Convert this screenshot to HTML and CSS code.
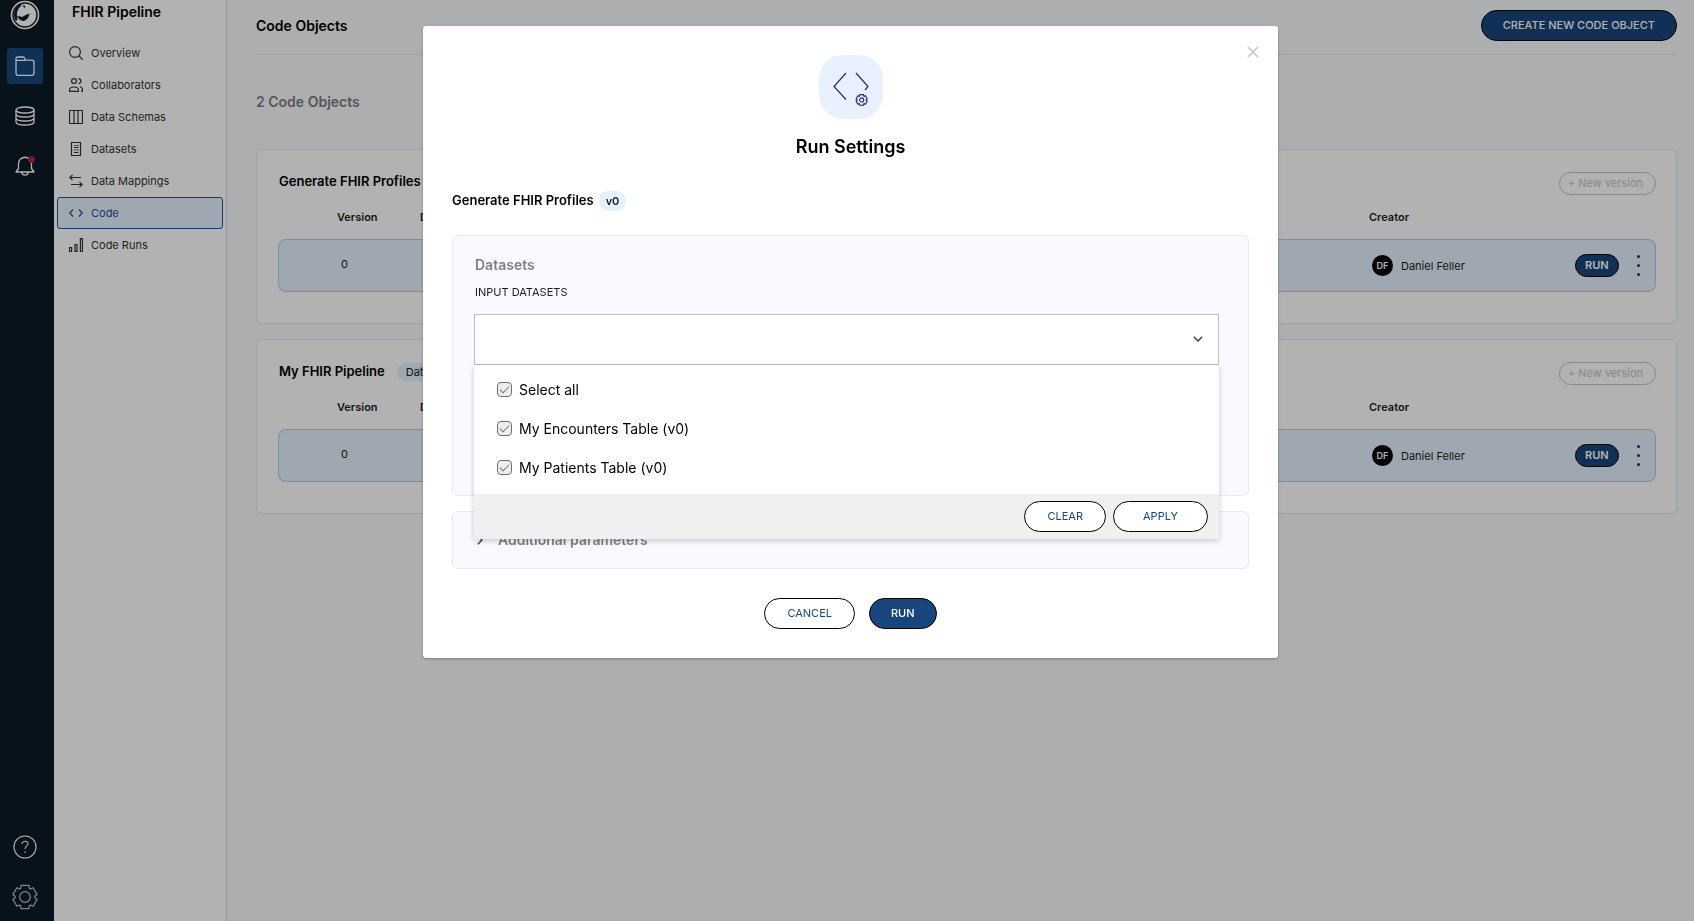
FILE: index.html
```html
<!DOCTYPE html>
<html lang="en">
<head>
    <meta charset="UTF-8">
    <meta name="viewport" content="width=device-width, initial-scale=1.0">
    <title>FHIR Pipeline - Code Objects</title>
    <link rel="stylesheet" href="styles.css">
</head>
<body>
    <div class="app">
        <nav class="rail">
            <a href="#" class="logo" aria-label="Home">
                <svg width="30" height="30" viewBox="0 0 30 30">
                    <circle cx="15" cy="15" r="13.5" fill="none" stroke="#fff" stroke-width="1.6"/>
                    <circle cx="15" cy="15" r="11.2" fill="#fff"/>
                    <path d="M10 4C4 8 2.500 15 6 21c2-1 1.500-3 1-5C6.500 12 8 8 12 5z" fill="#0b1b28"/>
                    <path d="M7 15.500c2 1.500 3.500.5 5 1.500 2-.5 4-3 8-3.500-1.500 1.500-1 3.500-2.500 5-2 1.500-2.500 3-4.500 2.500-2-.5-5-2-6-5.500z" fill="#0b1b28"/>
                    <path d="M13 4.500l1 4 1.500-2z" fill="#0b1b28"/>
                </svg>
            </a>
            <a href="#" class="rail-link active" aria-label="Projects">
                <svg width="20" height="20" viewBox="0 0 20 20" fill="none" stroke="#fff" stroke-width="1.3" stroke-linejoin="round">
                    <path d="M1 16.500V2.500Q1 1 2.500 1h5.500q1 0 1.500 1l.8 1.500q.4.700 1.200.700h5.300q2.200 0 2.200 2.200v10.600q0 2.500-2.500 2.500h-13Q1 19.500 1 16.500zM1 4.300h10"/>
                </svg>
            </a>
            <a href="#" class="rail-link" aria-label="Data">
                <svg width="20" height="20" viewBox="0 0 20 20" fill="none" stroke="#fff" stroke-width="1.3">
                    <ellipse cx="10" cy="4" rx="9" ry="3"/>
                    <path d="M1 4v12c0 4 18 4 18 0V4M1 8c0 4 18 4 18 0M1 12c0 4 18 4 18 0"/>
                </svg>
            </a>
            <a href="#" class="rail-link" aria-label="Notifications">
                <svg width="20" height="20" viewBox="0 0 20 20" fill="none" stroke="#fff" stroke-width="1.3" stroke-linejoin="round">
                    <path d="M1 16h18l-2.500-3.500V8c0-9-13-9-13 0v4.500zM7 16.500c0 3.500 6 3.500 6 0"/>
                    <circle cx="16.500" cy="3.500" r="3.500" fill="#b3242b" stroke="none"/>
                </svg>
            </a>
            <div class="rail-bottom">
                <a href="#" class="rail-link" aria-label="Help">
                    <svg width="24" height="24" viewBox="0 0 24 24" fill="none" stroke="#fff" stroke-width="1.1">
                        <circle cx="12" cy="12" r="11"/>
                        <path d="M9 9c0-4 6.500-3.500 6 0-.3 2-3 2-3 5M12 16.500v1.500"/>
                    </svg>
                </a>
                <a href="#" class="rail-link" aria-label="Settings">
                    <svg width="26" height="26" viewBox="0 0 26 26" fill="none" stroke="#b9c0c6" stroke-width="1.2" stroke-linejoin="round">
                        <path d="M9 1.400h8l.3 2.800 1.200.7 2.600-1.200 4 6.900-2.300 1.700v1.400l2.300 1.700-4 6.900-2.600-1.200-1.200.7-.3 2.800H9l-.3-2.800-1.200-.7-2.600 1.200-4-6.900 2.300-1.700v-1.400L.9 10.600l4-6.900 2.600 1.200 1.200-.7z"/>
                        <circle cx="13" cy="13" r="5.300"/>
                    </svg>
                </a>
            </div>
        </nav>

        <aside class="sidebar">
            <h2 class="project-name">FHIR Pipeline</h2>
            <a href="#" class="side-link">
                <svg class="side-icon" viewBox="0 0 14 14"><circle cx="6" cy="6" r="5.400"/><path d="M10 10l3.700 3.700"/></svg>
                Overview
            </a>
            <a href="#" class="side-link">
                <svg class="side-icon" viewBox="0 0 14 14"><circle cx="5" cy="3" r="2.400"/><path d="M.6 13.400v-1.400q0-3 4.400-3t4.400 3v1.400zM9.500.600q2.500.400 2.500 2.500t-2.500 2.500M11 8.500q2.500.800 2.500 3.500v1.400h-1.500"/></svg>
                Collaborators
            </a>
            <a href="#" class="side-link">
                <svg class="side-icon" viewBox="0 0 14 14"><path d="M.5.500h13v13H.5zM5 .500v13M9 .500v13"/></svg>
                Data Schemas
            </a>
            <a href="#" class="side-link">
                <svg class="side-icon" viewBox="0 0 14 14"><path d="M2.500.500h9v13h-9zM5 3.500h1.500M7.500 3.500H9.500M5 5.500h4.500M5 8h1.500M7.500 8h2M5 10.500h4.500"/></svg>
                Datasets
            </a>
            <a href="#" class="side-link">
                <svg class="side-icon" viewBox="0 0 14 14"><path d="M12 3.500H.8M3.500.800L.8 3.500l2.700 2.700M2 10.500h11.200M10.500 7.800l2.700 2.700-2.700 2.700"/></svg>
                Data Mappings
            </a>
            <a href="#" class="side-link selected">
                <svg class="side-icon" viewBox="0 0 14 14"><path d="M4 3.500L.8 7 4 10.500M10 3.500L13.200 7 10 10.500"/></svg>
                Code
            </a>
            <a href="#" class="side-link">
                <svg class="side-icon" viewBox="0 0 14 14"><path d="M.6 9.500h2v4h-2zM6 6.500h2v7H6zM11.400.600h2v12.900h-2z"/></svg>
                Code Runs
            </a>
        </aside>

        <main class="main">
            <header class="page-head">
                <h1>Code Objects</h1>
                <button type="button" class="btn primary">CREATE NEW CODE OBJECT</button>
            </header>
            <h2 class="count">2 Code Objects</h2>

            <section class="card">
                <div class="card-head">
                    <h3>Generate FHIR Profiles</h3>
                    <button type="button" class="new-version">+ New version</button>
                </div>
                <table class="versions">
                    <thead>
                        <tr><th class="col-version">Version</th><th class="col-desc">Description</th><th class="col-creator">Creator</th><th class="col-actions"></th></tr>
                    </thead>
                    <tbody>
                        <tr>
                            <td>0</td>
                            <td></td>
                            <td><div class="creator"><span class="avatar">DF</span>Daniel Feller</div></td>
                            <td>
                                <div class="actions">
                                    <button type="button" class="run-small">RUN</button>
                                    <button type="button" class="more" aria-label="More"><i></i><i></i><i></i></button>
                                </div>
                            </td>
                        </tr>
                    </tbody>
                </table>
            </section>

            <section class="card">
                <div class="card-head">
                    <h3>My FHIR Pipeline</h3>
                    <span class="tag">Data Pipeline</span>
                    <button type="button" class="new-version">+ New version</button>
                </div>
                <table class="versions">
                    <thead>
                        <tr><th class="col-version">Version</th><th class="col-desc">Description</th><th class="col-creator">Creator</th><th class="col-actions"></th></tr>
                    </thead>
                    <tbody>
                        <tr>
                            <td>0</td>
                            <td></td>
                            <td><div class="creator"><span class="avatar">DF</span>Daniel Feller</div></td>
                            <td>
                                <div class="actions">
                                    <button type="button" class="run-small">RUN</button>
                                    <button type="button" class="more" aria-label="More"><i></i><i></i><i></i></button>
                                </div>
                            </td>
                        </tr>
                    </tbody>
                </table>
            </section>
        </main>
    </div>

    <div class="overlay">
        <div class="modal" role="dialog" aria-modal="true" aria-labelledby="modalTitle">
            <button type="button" class="close" aria-label="Close">
                <svg width="12" height="12" viewBox="0 0 12 12"><path d="M1 1l10 10M11 1L1 11" stroke="#c4c4c4" stroke-width="1.500"/></svg>
            </button>
            <div class="modal-icon">
                <svg width="64" height="64" viewBox="0 0 64 64" fill="none" stroke="#252a6b" stroke-width="1.2">
                    <path d="M27 18L15 31.500 27 44.500M37 18L49 31.500 46 35"/>
                    <g transform="translate(36.700 39) scale(.46)" stroke-width="2.400">
                        <path d="M9 1.400h8l.3 2.800 1.200.7 2.600-1.200 4 6.900-2.300 1.700v1.400l2.300 1.700-4 6.900-2.600-1.200-1.200.7-.3 2.800H9l-.3-2.800-1.200-.7-2.600 1.200-4-6.900 2.300-1.700v-1.400L.9 10.600l4-6.900 2.600 1.200 1.200-.7z"/>
                        <circle cx="13" cy="13" r="4.500"/>
                    </g>
                </svg>
            </div>
            <h2 id="modalTitle" class="modal-title">Run Settings</h2>
            <div class="object-name">
                <h3>Generate FHIR Profiles</h3>
                <span class="version-badge">v0</span>
            </div>

            <div class="panel datasets">
                <h4>Datasets</h4>
                <label for="inputDatasets" class="field-label">INPUT DATASETS</label>
                <div class="select-wrap">
                    <select id="inputDatasets" class="dataset-select"></select>
                    <svg class="chevron" width="10" height="6" viewBox="0 0 10 6"><path d="M.8.800L5 5 9.200.800" fill="none" stroke="#444" stroke-width="1.500"/></svg>
                    <div class="dropdown">
                        <div class="options">
                            <label class="option"><input type="checkbox" checked>Select all</label>
                            <label class="option"><input type="checkbox" checked>My Encounters Table (v0)</label>
                            <label class="option"><input type="checkbox" checked>My Patients Table (v0)</label>
                        </div>
                        <div class="dropdown-foot">
                            <button type="button" class="btn">CLEAR</button>
                            <button type="button" class="btn apply">APPLY</button>
                        </div>
                    </div>
                </div>
            </div>

            <div class="panel params">
                <svg width="6" height="10" viewBox="0 0 6 10"><path d="M.8.800L5 5 .8 9.200" fill="none" stroke="#444" stroke-width="1.500"/></svg>
                <h4>Additional parameters</h4>
            </div>

            <div class="modal-actions">
                <button type="button" class="btn">CANCEL</button>
                <button type="button" class="btn primary">RUN</button>
            </div>
        </div>
    </div>
</body>
</html>
```
FILE: styles.css
```css
* {
    box-sizing: border-box;
}
body {
    margin: 0;
    font-family: Inter, sans-serif;
    font-size: 12px;
    color: #1c1c1c;
    background: #f8f9fc;
}
h1, h2, h3, h4 {
    margin: 0;
    color: #000;
    font-weight: 600;
}
h3 {
    padding-bottom: 3px;
    font-size: 13px;
}
a {
    text-decoration: none;
    color: inherit;
}
button {
    font-family: inherit;
    cursor: pointer;
}
.app {
    display: flex;
    min-height: 100vh;
}

/* left icon rail */
.rail {
    width: 54px;
    padding-right: 5px;
    background: #0b1b28;
    display: flex;
    flex-direction: column;
    align-items: center;
    gap: 14px;
}
.logo {
    height: 34px;
}
.rail-link {
    width: 36px;
    height: 36px;
    border-radius: 3px;
    display: flex;
    align-items: center;
    justify-content: center;
}
.rail-link.active {
    background: #17457c;
}
.rail-bottom {
    margin-top: auto;
    padding-bottom: 6px;
    display: flex;
    flex-direction: column;
    gap: 14px;
}

/* project navigation */
.sidebar {
    width: 173px;
    padding: 2px 3px;
    background: #fff;
    border-right: 1px solid #d5d6d9;
}
.project-name {
    padding-left: 15px;
    margin-bottom: 15px;
    font-size: 14px;
    line-height: 20px;
}
.side-link {
    display: flex;
    align-items: center;
    gap: 8px;
    height: 32px;
    padding-left: 11px;
    border: 1px solid transparent;
    border-radius: 3px;
    font-size: 11px;
    color: #333;
}
.side-icon {
    width: 14px;
    height: 14px;
    fill: none;
    stroke: #333;
    stroke-width: 1.2;
}
.side-link.selected {
    background: #e4effc;
    border-color: #17549c;
    color: #17549c;
}
.side-link.selected .side-icon {
    stroke: #17549c;
}

/* page */
.main {
    flex: 1;
    padding: 0 17px 0 29px;
}
.page-head {
    display: flex;
    align-items: center;
    justify-content: space-between;
    height: 55px;
    padding-bottom: 3px;
    border-bottom: 1px solid #e4e5e8;
}
.page-head h1 {
    font-size: 14px;
    font-weight: 600;
}
.count {
    margin: 37px 0;
    font-size: 14px;
    line-height: 20px;
    color: #7c7d80;
}
.btn {
    height: 31px;
    padding: 0 22px 2px;
    border: 1px solid #000;
    border-radius: 16px;
    background: #fff;
    color: #17457c;
    font-size: 11px;
    font-weight: 400;
}
.btn.primary {
    padding: 0 21px 2px;
    background: #17457c;
    color: #fff;
    font-weight: 500;
}
.card {
    height: 175px;
    margin-bottom: 15px;
    padding: 20px 20px 20px 21px;
    background: #fff;
    border: 1px solid #e6e7ea;
    border-radius: 6px;
}
.card-head {
    display: flex;
    align-items: center;
    height: 24px;
    padding-left: 1px;
}
.tag {
    margin-left: 12px;
    padding: 0 9px;
    border-radius: 9px;
    line-height: 18px;
    font-size: 11px;
    background: #e4effc;
}
.new-version {
    margin: 3px 0 0 auto;
    height: 23px;
    padding: 0 12px 2px 8px;
    border: 1px solid #c4c4c4;
    border-radius: 12px;
    background: #fff;
    color: #c4c4c4;
    font-size: 11px;
    font-weight: 400;
}
.versions {
    width: 100%;
    border-collapse: separate;
    border-spacing: 0;
    table-layout: fixed;
    font-size: 11px;
}
.versions th {
    height: 45px;
    padding: 1px 0 0;
    font-size: 11px;
    font-weight: 600;
    text-align: left;
}
.versions .col-version {
    width: 142px;
    padding-left: 59px;
}
.col-creator {
    width: 206px;
}
.col-actions {
    width: 81px;
}
.versions td {
    height: 53px;
    padding: 0;
    background: #e4effc;
    border: 1px solid #a9cdf5;
    border-width: 1px 0;
}
.versions td:first-child {
    padding: 0 0 3px 62px;
    border-left-width: 1px;
    border-radius: 8px 0 0 8px;
}
.versions td:last-child {
    border-right-width: 1px;
    border-radius: 0 8px 8px 0;
}
.creator {
    display: flex;
    align-items: center;
    gap: 8px;
    padding-left: 3px;
}
.avatar {
    width: 21px;
    line-height: 21px;
    border-radius: 50%;
    background: #000;
    color: #fff;
    font-size: 9px;
    font-weight: 600;
    text-align: center;
}
.actions {
    display: flex;
    align-items: center;
    gap: 16px;
}
.run-small {
    height: 23px;
    padding: 0 9px 1px;
    border: 1px solid #000;
    border-radius: 12px;
    background: #17457c;
    color: #fff;
    font-size: 11px;
    font-weight: 600;
}
.more {
    display: flex;
    flex-direction: column;
    gap: 6px;
    padding: 0 2px;
    border: 0;
    background: none;
}
.more i {
    width: 3px;
    height: 3px;
    border-radius: 50%;
    background: #17355f;
}

/* run settings modal */
.overlay {
    position: fixed;
    inset: 0;
    display: flex;
    justify-content: center;
    align-items: flex-start;
    padding: 26px 0 26px 7px;
    background: rgba(0, 0, 0, 0.3);
}
.modal {
    position: relative;
    width: 855px;
    padding: 29px;
    background: #fff;
    border-radius: 3px;
    box-shadow: 0 1px 3px rgba(0, 0, 0, 0.3);
}
.close {
    position: absolute;
    top: 20px;
    right: 19px;
    padding: 0;
    border: 0;
    background: none;
    line-height: 0;
}
.modal-icon {
    width: 64px;
    height: 64px;
    margin: 0 auto 16px;
    border-radius: 24px;
    background: #eaf1fe;
}
.modal-title {
    font-size: 18px;
    line-height: 24px;
    text-align: center;
}
.object-name {
    display: flex;
    align-items: center;
    gap: 5px;
    margin: 32px 0 24px;
}
.version-badge {
    padding: 0 7px;
    border-radius: 10px;
    background: #e4f1fe;
    line-height: 20px;
    font-size: 11px;
    font-weight: 600;
}
.panel {
    border: 1px solid #e9eaec;
    border-radius: 6px;
    background: #f9faff;
}
.panel h4 {
    font-size: 14px;
    line-height: 20px;
    color: #808080;
}
.datasets {
    height: 261px;
    padding: 19px 29px 0 21px;
}
.datasets h4,
.field-label {
    padding-left: 1px;
}
.field-label {
    display: block;
    margin: 8px 0 13px;
    font-size: 11px;
    line-height: 18px;
}
.select-wrap {
    position: relative;
}
.dataset-select {
    display: block;
    width: 100%;
    height: 51px;
    border: 1px solid #bfbfbf;
    border-radius: 0;
    background: #fff;
    appearance: none;
}
.chevron {
    position: absolute;
    top: 22px;
    right: 16px;
    pointer-events: none;
}
.dropdown {
    position: absolute;
    top: 100%;
    left: 0;
    right: 0;
    background: #fff;
    box-shadow: 0 2px 6px rgba(0, 0, 0, 0.2);
}
.options {
    padding: 5px 23px 7px;
}
.option {
    display: flex;
    align-items: center;
    gap: 7px;
    height: 39px;
    font-size: 14px;
    color: #000;
}
.option input {
    appearance: none;
    width: 15px;
    height: 15px;
    margin: 0;
    border: 1px solid #6b6f76;
    border-radius: 4px;
    background: #ededed;
    display: grid;
    place-items: center;
}
.option input:checked::before {
    content: "";
    width: 8px;
    height: 4px;
    margin-bottom: 2px;
    border: solid #777;
    border-width: 0 0 1px 1px;
    transform: rotate(-45deg);
}
.dropdown-foot {
    display: flex;
    justify-content: flex-end;
    align-items: center;
    gap: 7px;
    height: 45px;
    padding-right: 11px;
    background: #f0f0f0;
}
.btn.apply {
    padding: 0 29px 2px;
}
.params {
    display: flex;
    align-items: center;
    gap: 15px;
    height: 58px;
    margin-top: 15px;
    padding-left: 24px;
}
.modal-actions {
    display: flex;
    justify-content: center;
    gap: 14px;
    margin-top: 29px;
}
```
